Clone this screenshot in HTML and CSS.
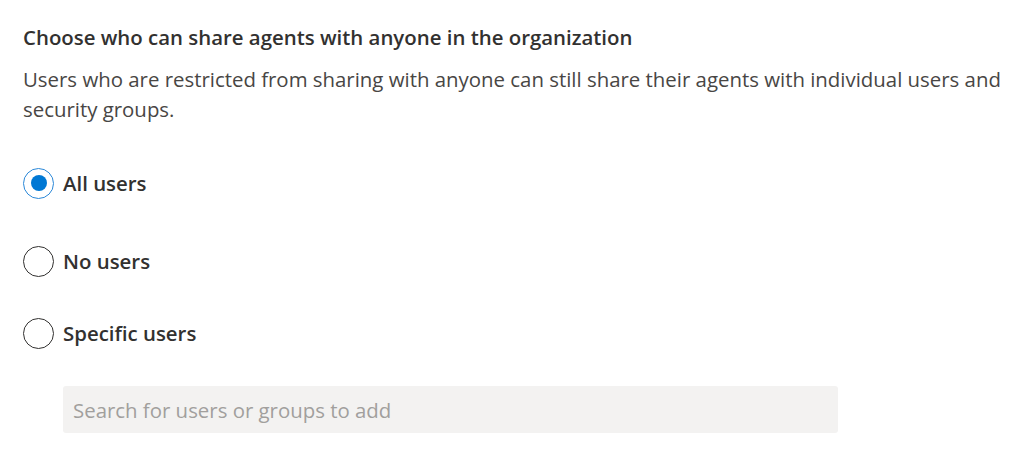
FILE: index.html
```html
<!DOCTYPE html>
<html>
<head>
<meta charset="utf-8">
<link rel="stylesheet" href="styles.css">
</head>
<body>
<div class="page">
  <h2 class="title">Choose who can share agents with anyone in the organization</h2>
  <p class="desc">Users who are restricted from sharing with anyone can still share their agents with individual users and security groups.</p>
  <div class="options">
    <label class="option option-first">
      <span class="radio checked"><span class="dot"></span></span>
      <span class="label">All users</span>
    </label>
    <label class="option option-mid">
      <span class="radio"></span>
      <span class="label">No users</span>
    </label>
    <label class="option option-last">
      <span class="radio"></span>
      <span class="label">Specific users</span>
    </label>
  </div>
  <div class="search">Search for users or groups to add</div>
</div>
</body>
</html>
```
FILE: styles.css
```css
html, body {
  margin: 0;
  padding: 0;
  background: #ffffff;
}
body {
  font-family: "Open Sans", "Noto Sans", sans-serif;
  color: #323130;
}
.page {
  padding: 22px 0 0 23px;
  width: 995px;
}
.title {
  margin: 0;
  font-size: 20.4px;
  font-weight: 600;
  line-height: 30px;
  color: #323130;
}
.desc {
  margin: 12px 0 0 0;
  font-size: 20.4px;
  line-height: 30px;
  color: #484644;
}
.options {
  display: flex;
  flex-direction: column;
}
.option {
  display: flex;
  align-items: center;
  gap: 9px;
  height: 32px;
}
.option-first { margin-top: 43px; }
.option-mid { margin-top: 46px; }
.option-last { margin-top: 40px; }
.radio {
  width: 31px;
  height: 31px;
  border: 1.5px solid #323130;
  border-radius: 50%;
  display: flex;
  align-items: center;
  justify-content: center;
  box-sizing: border-box;
}
.radio.checked {
  border-color: #2b88d8;
}
.dot {
  width: 16px;
  height: 16px;
  border-radius: 50%;
  background: #0078d4;
}
.label {
  font-size: 20.4px;
  font-weight: 600;
  color: #323130;
}
.search {
  margin: 37px 0 0 40px;
  width: 775px;
  height: 47px;
  box-sizing: border-box;
  background: #f3f2f1;
  border-radius: 3px;
  padding-left: 10px;
  display: flex;
  align-items: center;
  font-size: 20.4px;
  color: #a19f9d;
}
```
